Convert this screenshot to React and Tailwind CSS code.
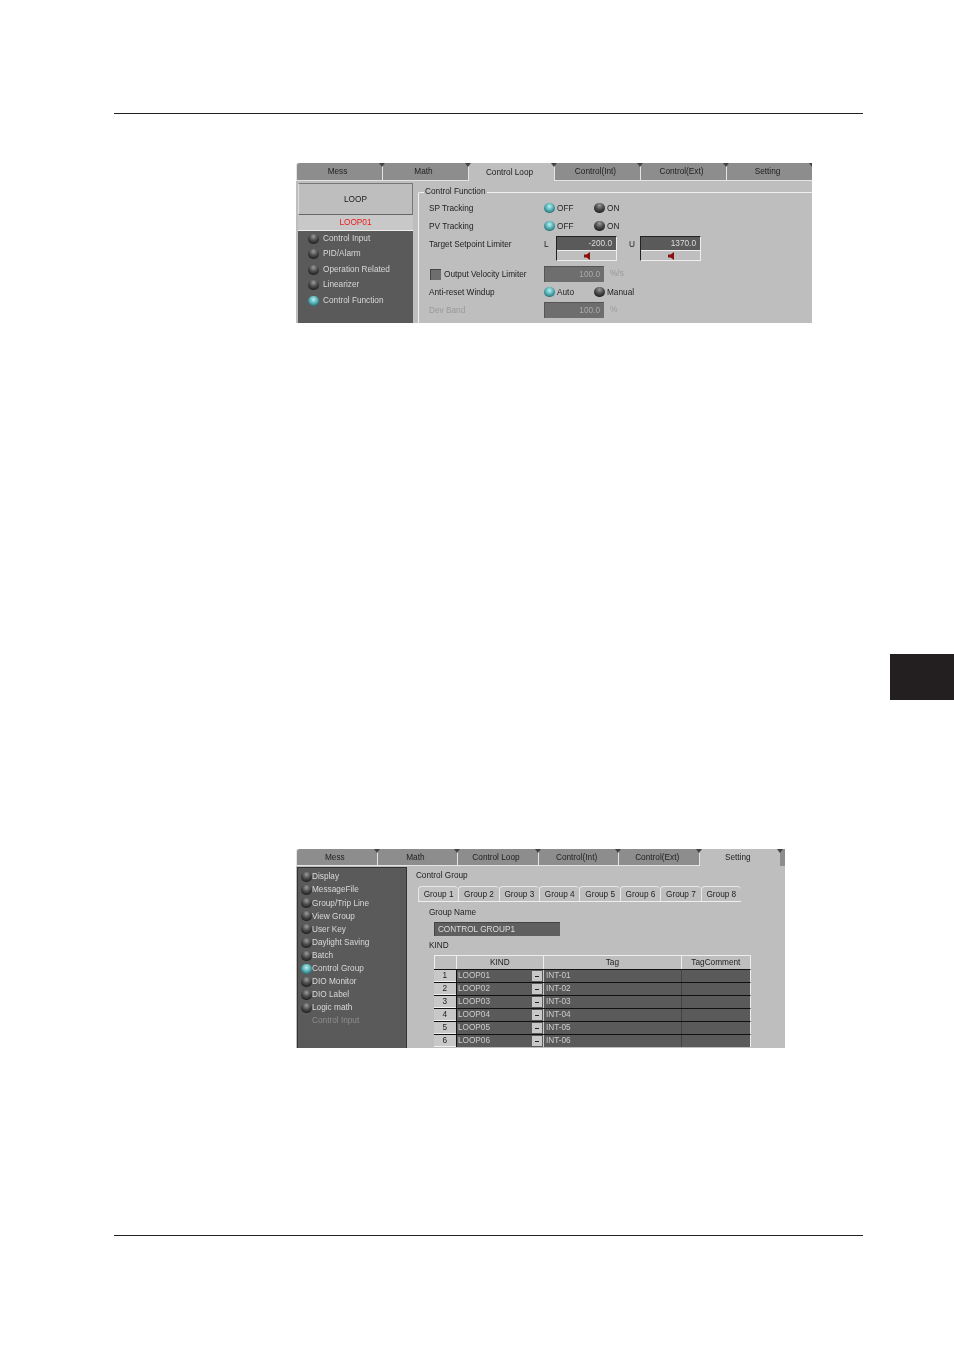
const FONT = "font-['Liberation_Sans',Arial,sans-serif]";

function Led({ on }) {
  return (
    <span
      className={
        "block w-[11px] h-[10px] shrink-0 rounded-full " +
        (on
          ? "bg-[radial-gradient(circle_at_50%_35%,#bff0f0_0%,#55b0b5_45%,#1d5f6a_85%,#15323a_100%)]"
          : "bg-[radial-gradient(circle_at_50%_25%,#9a9a9a_0%,#4a4a4a_45%,#1a1a1a_85%,#111_100%)]")
      }
    />
  );
}

function Tab({ label, active, w }) {
  return (
    <div
      className={
        "relative h-full flex items-center justify-center pr-[4px] pt-[2px] text-[#222] border-l border-[#e4e4e4] rounded-tl-[3px] " +
        w +
        (active ? " bg-[#bebebe]" : " bg-[#8d8d8d] border-b border-b-[#e4e4e4]")
      }
    >
      {label}
      <span className="absolute -right-[3px] top-0 w-0 h-0 border-l-[3px] border-r-[3px] border-t-[4px] border-l-transparent border-r-transparent border-t-[#444] z-10" />
    </div>
  );
}

function Radio({ on, label, w }) {
  return (
    <div className={"flex items-center gap-[2px] " + w}>
      <Led on={on} />
      <span className="pt-[2px]">{label}</span>
    </div>
  );
}

function Row({ label, children, muted }) {
  return (
    <div className="flex items-center h-[18px]">
      <div className={"w-[115px] pt-[2px] " + (muted ? "text-[#999]" : "")}>{label}</div>
      {children}
    </div>
  );
}

function NumBox({ value }) {
  return (
    <div className="mt-[1px] w-[61px] h-[25px] border-t border-l border-t-[#222] border-l-[#222] border-r border-b border-r-[#eee] border-b-[#eee] flex flex-col">
      <div className="h-[13px] bg-[#5a5a5a] text-[#ddd] text-right pr-[4px] leading-[13px]">{value}</div>
      <div className="flex-1 bg-[#bebebe] border-t border-[#eee] flex items-center justify-center">
        <svg width="6" height="8" viewBox="0 0 6 8">
          <path d="M0 2.5h2.5L6 0v8L2.5 5.5H0z" fill="#8b1010" />
        </svg>
      </div>
    </div>
  );
}

function GreyInput({ value }) {
  return (
    <div className="w-[60px] h-[16px] bg-[#6e6e6e] border-t border-l border-[#555] text-[#aaa] text-right pr-[4px] leading-[15px]">
      {value}
    </div>
  );
}

function PanelOne() {
  const tabs = ["Mess", "Math", "Control Loop", "Control(Int)", "Control(Ext)", "Setting"];
  const items = ["Control Input", "PID/Alarm", "Operation Related", "Linearizer", "Control Function"];
  return (
    <div className="ml-[296px] mt-[49px] w-[516px] h-[160px] flex flex-col bg-[#bebebe] text-[8.25px] blur-[0.3px]">
      <div className="flex h-[18px] shrink-0 bg-white overflow-hidden">
        {tabs.map((t, i) => (
          <Tab key={t} label={t} active={i === 2} w="w-[86px]" />
        ))}
      </div>
      <div className="flex flex-1 min-h-0 pt-[2px] pl-[2px]">
        <div className="w-[115px] flex flex-col">
          <div className="h-[32px] pt-[2px] bg-[#bebebe] border border-t-[#777] border-l-[#ddd] border-r-[#777] border-b-[#666] flex items-center justify-center text-[#222]">
            LOOP
          </div>
          <div className="h-[16px] pt-[2px] bg-[#c8c8c8] border-b border-[#eee] flex items-center justify-center text-[#f01818]">
            LOOP01
          </div>
          <div className="flex-1 bg-[#5a5a5a] pl-[10px] flex flex-col text-[#d8d8d8]">
            {items.map((t, i) => (
              <div key={t} className="h-[15.5px] flex items-center gap-[4px]">
                <Led on={i === 4} />
                <span>{t}</span>
              </div>
            ))}
          </div>
        </div>
        <div className="ml-[5px] mt-[9px] flex-1 border-t border-l border-[#f0f0f0] relative pl-[10px] pt-[6px] rounded-tl-[2px] text-[#222]">
          <span className="absolute left-[5px] -top-[6px] bg-[#bebebe] px-[1px] leading-[10px]">Control Function</span>
          <Row label="SP Tracking">
            <Radio on label="OFF" w="w-[50px]" />
            <Radio label="ON" w="w-[40px]" />
          </Row>
          <Row label="PV Tracking">
            <Radio on label="OFF" w="w-[50px]" />
            <Radio label="ON" w="w-[40px]" />
          </Row>
          <div className="flex h-[26px] items-start">
            <div className="w-[115px] pt-[4px]">Target Setpoint Limiter</div>
            <div className="w-[12px] pt-[4px]">L</div>
            <NumBox value="-200.0" />
            <div className="w-[23px] pt-[4px] pl-[12px]">U</div>
            <NumBox value="1370.0" />
          </div>
          <div className="flex items-center h-[18px] mt-[4px]">
            <div className="w-[115px] pl-[1px] flex items-center gap-[3px]">
              <span className="block w-[11px] h-[11px] bg-[#6e6e6e] border-t border-l border-[#444]" />
              <span className="pt-[2px]">Output Velocity Limiter</span>
            </div>
            <GreyInput value="100.0" />
            <span className="ml-[6px] text-[#999]">%/s</span>
          </div>
          <Row label="Anti-reset Windup">
            <Radio on label="Auto" w="w-[50px]" />
            <Radio label="Manual" w="w-[50px]" />
          </Row>
          <Row label="Dev Band" muted>
            <GreyInput value="100.0" />
            <span className="ml-[6px] text-[#999]">%</span>
          </Row>
        </div>
      </div>
    </div>
  );
}

function PanelTwo() {
  const tabs = ["Mess", "Math", "Control Loop", "Control(Int)", "Control(Ext)", "Setting"];
  const items = [
    "Display", "MessageFile", "Group/Trip Line", "View Group", "User Key", "Daylight Saving",
    "Batch", "Control Group", "DIO Monitor", "DIO Label", "Logic math",
  ];
  const groups = ["Group 1", "Group 2", "Group 3", "Group 4", "Group 5", "Group 6", "Group 7", "Group 8"];
  const rows = [1, 2, 3, 4, 5, 6];
  return (
    <div className="ml-[296px] mt-[149px] w-[489px] h-[199px] flex flex-col bg-[#bebebe] text-[8.25px] text-[#222] blur-[0.3px]">
      <div className="flex h-[17px] shrink-0 bg-white">
        {tabs.map((t, i) => (
          <Tab key={t} label={t} active={i === 5} w="w-[80.6px]" />
        ))}
        <div className="flex-1 h-full bg-[#8d8d8d]" />
      </div>
      <div className="flex flex-1 min-h-0 pt-[1px] pl-[1px]">
        <div className="w-[110px] bg-[#5a5a5a] border border-t-[#333] border-l-[#333] border-r-[#333] border-b-0 pl-[3px] pt-[2.5px] text-[#d8d8d8]">
          {items.map((t, i) => (
            <div key={t} className="h-[13.1px] flex items-center">
              <Led on={i === 7} />
              <span className="pt-[1px]">{t}</span>
            </div>
          ))}
          <div className="h-[13.1px] pl-[11px] flex items-center text-[#8c8c8c]">Control Input</div>
        </div>
        <div className="flex-1 pl-[9px] pt-[2px] flex flex-col">
          <div className="h-[13px] leading-[13px]">Control Group</div>
          <div className="flex h-[16px] mt-[4px] ml-[2px] mr-[44px] border-b border-[#eee]">
            {groups.map((g, i) => (
              <div
                key={g}
                className={
                  "w-[40.4px] pt-[2px] flex items-center justify-center border-l border-t border-[#e8e8e8] rounded-t-[4px] " +
                  (i === 0 ? "bg-[#c4c4c4]" : "")
                }
              >
                {g}
              </div>
            ))}
          </div>
          <div className="pl-[13px] pt-[5px]">
            <div className="h-[12px] leading-[12px]">Group Name</div>
            <div className="ml-[5px] mt-[3px] w-[126px] h-[14px] bg-[#5f5f5f] text-[#ddd] pl-[3px] leading-[14px] border-t border-l border-[#444]">
              CONTROL GROUP1
            </div>
            <div className="h-[12px] mt-[4px] leading-[12px]">KIND</div>
            <div className="ml-[5px] mt-[3px] w-[317px] flex flex-col">
              <div className="flex h-[14px] border-t border-r border-[#eee]">
                <div className="w-[22px] border-l border-[#eee]" />
                <div className="w-[87px] border-l border-[#eee] text-center leading-[13px]">KIND</div>
                <div className="w-[138px] border-l border-[#eee] text-center leading-[13px]">Tag</div>
                <div className="flex-1 border-l border-[#eee] text-center leading-[13px]">TagComment</div>
              </div>
              {rows.map((n) => (
                <div key={n} className="flex h-[13px] border-t border-[#111] border-r-[1px] border-r-[#eee]">
                  <div className="w-[22px] bg-[#c8c8c8] border-b border-[#eee] text-center leading-[12px]">{n}</div>
                  <div className="w-[87px] bg-[#5a5a5a] border-l border-[#111] text-[#ccc] flex items-center pl-[1px] pr-[1px] justify-between">
                    <span>LOOP0{n}</span>
                    <span className="w-[10px] h-[10px] bg-[#c8c8c8] flex items-center justify-center">
                      <span className="block w-[4px] h-[1px] bg-[#222]" />
                    </span>
                  </div>
                  <div className="w-[138px] bg-[#5a5a5a] border-l border-[#ccc] text-[#ccc] pl-[2px] leading-[12px]">INT-0{n}</div>
                  <div className="flex-1 bg-[#5a5a5a] border-l border-[#444]" />
                </div>
              ))}
            </div>
          </div>
        </div>
      </div>
    </div>
  );
}

export default function App() {
  return (
    <div className={"w-[954px] h-[1350px] bg-white overflow-hidden pt-[113px] " + FONT}>
      <div className="mx-[114px] w-[749px] h-px bg-[#222]" />
      <PanelOne />
      <div className="mt-[331px] ml-auto w-[64px] h-[46px] bg-[#231f20]" />
      <PanelTwo />
      <div className="ml-[114px] mt-[187px] w-[749px] h-px bg-[#222]" />
    </div>
  );
}
